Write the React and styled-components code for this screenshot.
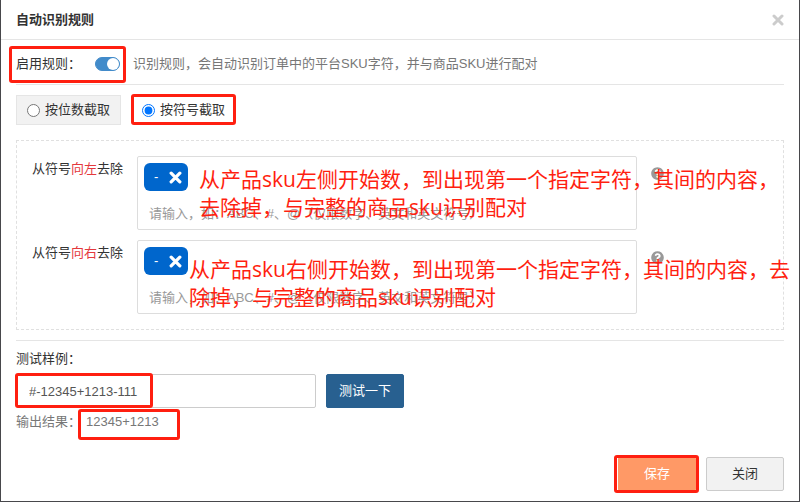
import { useState } from 'react';
import styled, { createGlobalStyle } from 'styled-components';
import { FaQuestionCircle } from 'react-icons/fa';

const GlobalStyle = createGlobalStyle`
  * {
    box-sizing: border-box;
  }
  body {
    margin: 0;
    background: #fff;
    color: #333;
    font-family: "Liberation Sans", "Noto Sans CJK SC", sans-serif;
    font-size: 13px;
    line-height: 18px;
  }
  button, input {
    font-family: inherit;
    font-size: inherit;
    color: inherit;
  }
`;

const Dialog = styled.div`
  display: flex;
  flex-direction: column;
  min-height: 100vh;
  border: 1px solid #47474b;
  border-top: none;
  background: #fff;
`;
const Header = styled.header`
  display: flex;
  align-items: center;
  justify-content: space-between;
  height: 40px;
  padding: 0 15px;
  border-bottom: 1px solid #e5e5e5;
`;
const Title = styled.h1`
  margin: 0;
  font-size: 13px;
  font-weight: bold;
  line-height: 18px;
`;
const IconButton = styled.button`
  display: flex;
  padding: 0;
  border: none;
  background: none;
  color: ${(props) => props.$color};
  cursor: pointer;
`;
const Body = styled.main`
  padding: 15px 15px 0;
`;
const EnableRow = styled.div`
  display: flex;
  align-items: center;
  padding-bottom: 11px;
  border-bottom: 1px solid #e5e5e5;
`;
const EnableLabel = styled.label`
  position: relative;
  display: flex;
  align-items: center;
  gap: 14px;
`;
const Toggle = styled.input`
  appearance: none;
  display: flex;
  justify-content: flex-end;
  width: 25px;
  height: 14px;
  margin: 0;
  border: 1px solid #428bca;
  border-radius: 7px;
  background: #428bca;
  &::before {
    content: "";
    width: 12px;
    height: 12px;
    border-radius: 50%;
    background: #fff;
  }
  &:not(:checked) {
    justify-content: flex-start;
    border-color: #ccc;
    background: #ccc;
  }
`;
const Hint = styled.span`
  margin-left: 13px;
  color: #777;
`;
const Modes = styled.div`
  display: flex;
  gap: 10px;
  margin: 10px 0 15px;
`;
const Mode = styled.label`
  position: relative;
  display: flex;
  align-items: center;
  gap: 5px;
  height: 30px;
  padding: 0 10px;
  border: 1px solid ${(props) => (props.$active ? '#fff' : '#e5e5e5')};
  background: ${(props) => (props.$active ? '#fff' : '#f2f2f2')};
`;
const Radio = styled.input`
  width: 13px;
  height: 13px;
  margin: 0;
`;
const Rules = styled.section`
  display: flex;
  flex-direction: column;
  gap: 10px;
  padding: 15px;
  border: 1px dashed #e0e0e0;
`;
const Rule = styled.div`
  position: relative;
  display: flex;
  align-items: flex-start;
`;
const RuleLabel = styled.label`
  flex: none;
  width: 105px;
  line-height: 26px;
`;
const Direction = styled.span`
  color: #e4393c;
`;
const TagBox = styled.div`
  flex: 0 1 500px;
  padding: 6px 6px 0;
  border: 1px solid #ddd;
  border-radius: 2px;
`;
const Tag = styled.span`
  display: flex;
  align-items: center;
  justify-content: space-between;
  width: 44px;
  height: 28px;
  padding: 0 6px 0 10px;
  border-radius: 6px;
  background: #0066cc;
  color: #fff;
`;
const TagInput = styled.input`
  display: block;
  width: 100%;
  height: 32px;
  margin-top: 6px;
  padding: 0 5px;
  border: none;
  outline: none;
  background: none;
  &::placeholder {
    color: #999;
  }
`;
const Help = styled(FaQuestionCircle)`
  flex: none;
  width: 13px;
  height: 13px;
  margin: 11px 0 0 14px;
  color: #999;
`;
const TestArea = styled.section`
  margin-top: 10px;
  padding-top: 9px;
  border-top: 1px solid #e5e5e5;
`;
const TestRow = styled.div`
  display: flex;
  gap: 10px;
  margin: 6px 0 5px;
`;
const Sample = styled.div`
  position: relative;
  flex: 0 1 300px;
`;
const SampleInput = styled.input`
  display: block;
  width: 100%;
  height: 34px;
  padding: 0 12px;
  border: 1px solid #ccc;
  border-radius: 2px;
  color: #555;
  outline: none;
`;
const Button = styled.button`
  min-width: 78px;
  height: 34px;
  padding: 0 12px 3px;
  border: 1px solid ${(props) => props.$border || props.$bg};
  border-radius: 2px;
  background: ${(props) => props.$bg};
  color: ${(props) => props.$color || '#fff'};
`;
const Result = styled.div`
  display: flex;
  gap: 5px;
  color: #777;
`;
const Value = styled.output`
  position: relative;
`;
const Footer = styled.footer`
  display: flex;
  justify-content: flex-end;
  gap: 10px;
  margin-top: auto;
  padding: 10px 15px;
`;
const Anchor = styled.div`
  position: relative;
`;
// red frame drawn over the part it points out
const Mark = styled.span`
  position: absolute;
  inset: ${(props) => props.$inset};
  border: 3px solid #ff1f10;
  border-radius: 3px;
  pointer-events: none;
`;
const Note = styled.p`
  position: absolute;
  top: ${(props) => props.$top};
  left: ${(props) => props.$left};
  margin: 0;
  color: #ff1f10;
  font-family: "Open Sans", "Noto Sans CJK SC", sans-serif;
  font-size: 21px;
  line-height: 28px;
  white-space: nowrap;
  pointer-events: none;
`;

function Cross({ size }) {
  return (
    <svg width={size} height={size} viewBox="0 0 12 12" aria-hidden="true">
      <path
        d="M2 2L10 10M10 2L2 10"
        fill="none"
        stroke="currentColor"
        strokeWidth="3"
        strokeLinecap="round"
      />
    </svg>
  );
}

function TrimRule({ id, direction, children }) {
  return (
    <Rule>
      <RuleLabel htmlFor={id}>
        从符号<Direction>{direction}</Direction>去除
      </RuleLabel>
      <TagBox>
        <Tag>
          -
          <IconButton type="button" $color="#fff" aria-label="删除">
            <Cross size={13} />
          </IconButton>
        </Tag>
        <TagInput id={id} placeholder="请输入，如：ABC、#、@（仅限数字、英文和英文符号）" />
      </TagBox>
      <Help />
      {children}
    </Rule>
  );
}

function App() {
  const [enabled, setEnabled] = useState(true);
  const [mode, setMode] = useState('symbol');
  const [sample, setSample] = useState('#-12345+1213-111');

  return (
    <>
      <GlobalStyle />
      <Dialog role="dialog" aria-labelledby="title">
        <Header>
          <Title id="title">自动识别规则</Title>
          <IconButton type="button" $color="#ccc" aria-label="关闭">
            <Cross size={12} />
          </IconButton>
        </Header>
        <Body>
          <EnableRow>
            <EnableLabel>
              启用规则：
              <Toggle
                type="checkbox"
                checked={enabled}
                onChange={(e) => setEnabled(e.target.checked)}
              />
              <Mark $inset="-9px -6px -10px -7px" />
            </EnableLabel>
            <Hint>识别规则，会自动识别订单中的平台SKU字符，并与商品SKU进行配对</Hint>
          </EnableRow>
          <Modes>
            <Mode>
              <Radio
                type="radio"
                name="mode"
                checked={mode === 'digits'}
                onChange={() => setMode('digits')}
              />
              按位数截取
            </Mode>
            <Mode $active>
              <Radio
                type="radio"
                name="mode"
                checked={mode === 'symbol'}
                onChange={() => setMode('symbol')}
              />
              按符号截取
              <Mark $inset="-2px -1px -1px -1px" />
            </Mode>
          </Modes>
          <Rules>
            <TrimRule id="trim-left" direction="向左">
              <Note $top="9px" $left="167px">
                从产品sku左侧开始数，到出现第一个指定字符，其间的内容，
                <br />
                去除掉，与完整的商品sku识别配对
              </Note>
            </TrimRule>
            <TrimRule id="trim-right" direction="向右">
              <Note $top="15px" $left="157px">
                从产品sku右侧开始数，到出现第一个指定字符，其间的内容，去
                <br />
                除掉，与完整的商品sku识别配对
              </Note>
            </TrimRule>
          </Rules>
          <TestArea>
            <label htmlFor="sample">测试样例：</label>
            <TestRow>
              <Sample>
                <SampleInput
                  id="sample"
                  value={sample}
                  onChange={(e) => setSample(e.target.value)}
                />
                <Mark $inset="-1px 163px 0 -1px" />
              </Sample>
              <Button type="button" $bg="#286090">测试一下</Button>
            </TestRow>
            <Result>
              输出结果：
              <Value htmlFor="sample">
                12345+1213
                <Mark $inset="-4px -21px -9px -8px" />
              </Value>
            </Result>
          </TestArea>
        </Body>
        <Footer>
          <Anchor>
            <Button type="button" $bg="#ff9966">保存</Button>
            <Mark $inset="-2px -3px -2px -4px" />
          </Anchor>
          <Button type="button" $bg="#f2f2f2" $border="#ccc" $color="#333">关闭</Button>
        </Footer>
      </Dialog>
    </>
  );
}

export default App;
